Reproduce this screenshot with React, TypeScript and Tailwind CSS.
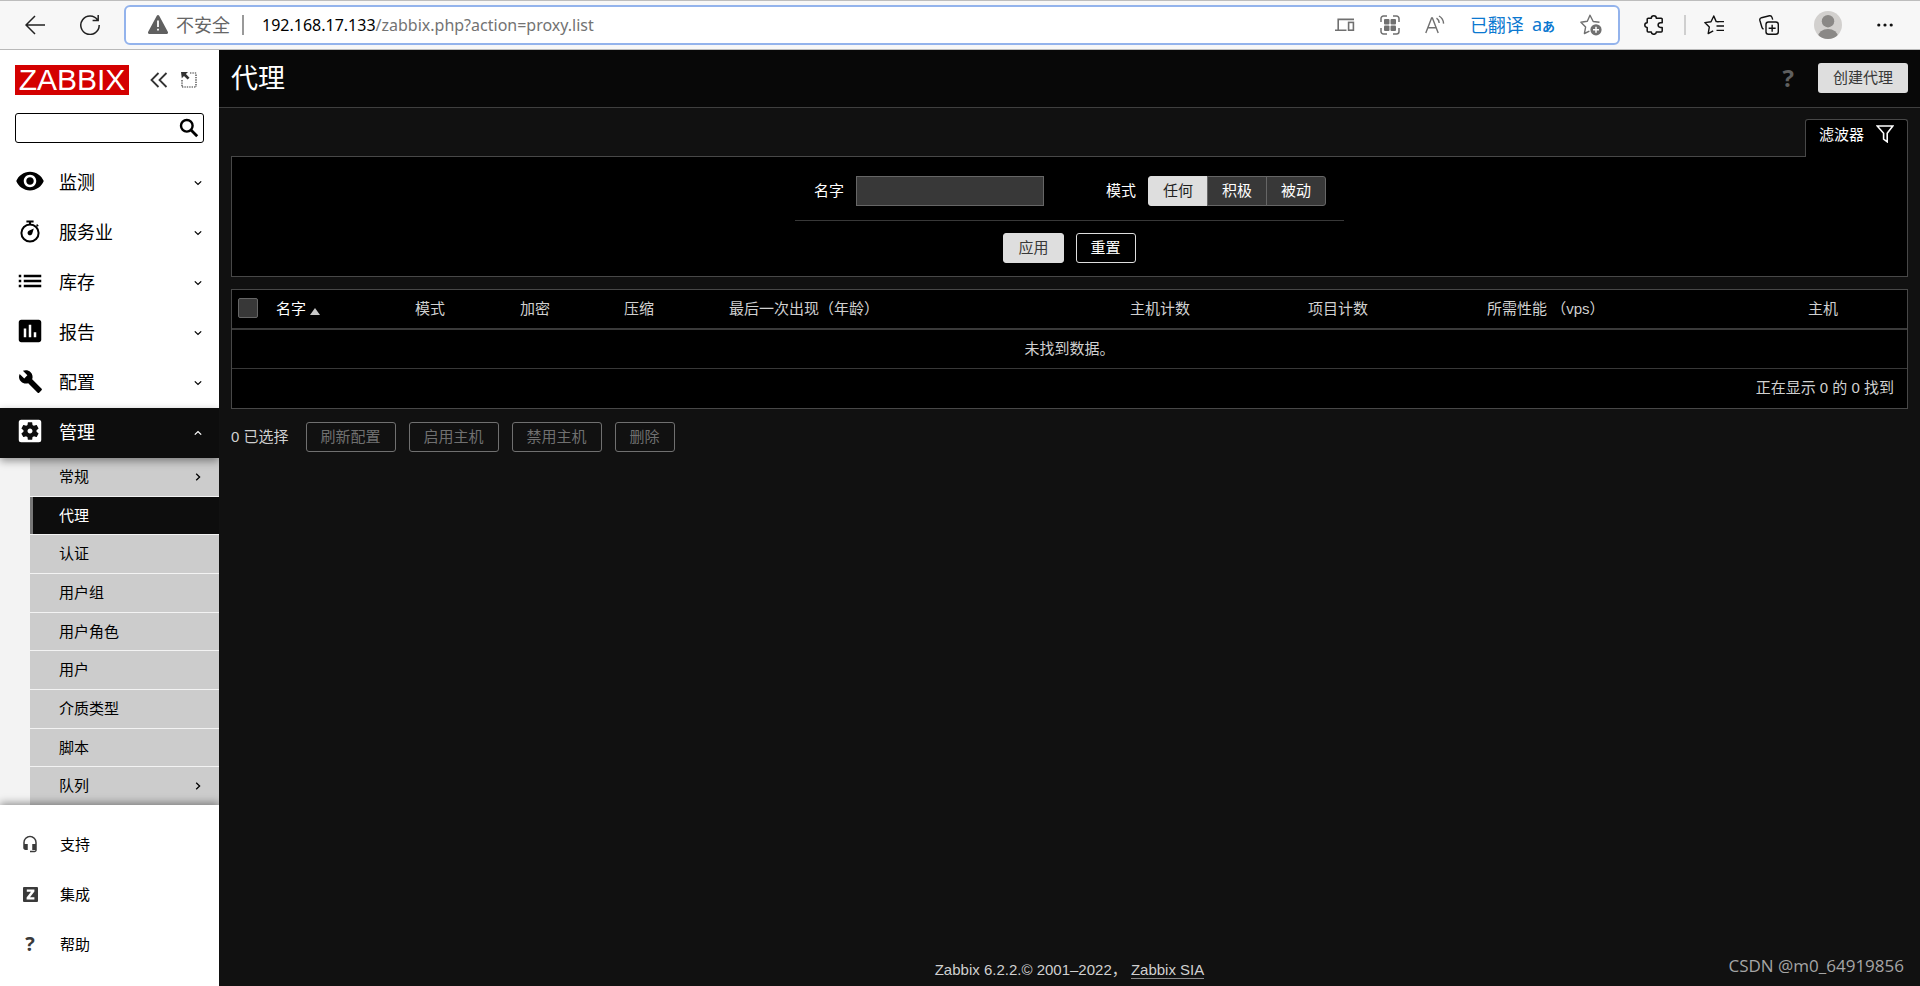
import React, { useState } from "react";
import {
  MdAssessment,
  MdBuild,
  MdHeadsetMic,
  MdList,
  MdSettingsApplications,
  MdVisibility,
} from "react-icons/md";

/* ---------- icons ---------- */

const SearchIcon = () => (
  <svg width="20" height="20" viewBox="0 0 20 20" fill="none" stroke="#000">
    <circle cx="7.800" cy="7.800" r="5.800" strokeWidth="2.400" />
    <path d="M12 12l6.200 6.200" strokeWidth="2.800" />
  </svg>
);

const StopwatchIcon = () => (
  <svg width="30" height="30" viewBox="0 0 30 30" fill="none">
    <circle cx="15" cy="17" r="8.6" stroke="#000" strokeWidth="2" />
    <path d="M11.4 5.6h7.200M15 5v3.500" stroke="#000" strokeWidth="2" />
    <path d="M21.600 8.600l1.600 1.600" stroke="#000" strokeWidth="1.500" />
    <path d="M18.800 12.400l-1.600 5.400a2.400 2.400 0 1 1-3.300-3z" fill="#000" />
  </svg>
);

const ChevronIcon = ({ dir }: { dir: "up" | "down" | "right" }) => (
  <svg
    width="8"
    height="8"
    viewBox="0 0 8 8"
    fill="none"
    stroke="currentColor"
    strokeWidth="1.3"
  >
    {dir === "down" && <path d="M0.8 2.4L4 5.4l3.200-3" />}
    {dir === "up" && <path d="M0.8 5.6L4 2.600l3.200 3" />}
    {dir === "right" && <path d="M2.200 0.800L5.600 4 2.200 7.200" />}
  </svg>
);

const CollapseIcon = () => (
  <svg width="18" height="16" viewBox="0 0 18 16" fill="none">
    <path d="M8.5 1L1.5 8l7 7M16.5 1l-7 7 7 7" stroke="#333" strokeWidth="1.8" />
  </svg>
);

const KioskIcon = () => (
  <svg width="16" height="16" viewBox="0 0 16 16" fill="none">
    <path
      d="M9 1h7M15 2.5V15M1 8v7M1 15h14"
      stroke="#333"
      strokeWidth="1.2"
      strokeDasharray="1.4 1"
    />
    <path d="M0 0h7L4.9 2.1l3.6 3.6-1.9 1.9-3.6-3.6L0.8 6.2z" fill="#333" />
  </svg>
);

const FunnelIcon = () => (
  <svg width="18" height="18" viewBox="0 0 18 18" fill="none">
    <path
      d="M1.2 1h15.6l-5.6 7.2v8.6l-3.6-2.6V8.2z"
      stroke="#fff"
      strokeWidth="1.6"
    />
  </svg>
);

const IntegrationIcon = () => (
  <svg width="15" height="15" viewBox="0 0 15 15">
    <rect width="15" height="15" rx="1" fill="#3a3a3a" />
    <path d="M3.8 2.600h7.600v2L7 10.300h4.400v2.200H3.600v-2L8 4.800H3.800z" fill="#fff" />
  </svg>
);

const BackIcon = () => (
  <svg width="20" height="20" viewBox="0 0 20 20" fill="none">
    <path d="M20 10H1.2M10 1L1 10l9 9" stroke="#222" strokeWidth="1.5" />
  </svg>
);

const ReloadIcon = () => (
  <svg width="20" height="20" viewBox="0 0 20 20" fill="none">
    <path d="M17.6 5A9.2 9.2 0 1 0 19.2 10M18.2 0v5.6h-5.6" stroke="#222" strokeWidth="1.5" />
  </svg>
);

const WarningIcon = () => (
  <svg width="20" height="19" viewBox="0 0 20 19">
    <path
      d="M8.8 0.8a1.4 1.4 0 0 1 2.4 0l8.6 16a1.4 1.4 0 0 1-1.2 2.2H1.4a1.4 1.4 0 0 1-1.2-2.2z"
      fill="#606060"
    />
    <path d="M10 5.5v6.5M10 13.8v1.8" stroke="#fff" strokeWidth="1.8" />
  </svg>
);

const DevicesIcon = () => (
  <svg width="20" height="20" viewBox="0 0 20 20" fill="none" stroke="#707070" strokeWidth="1.6">
    <path d="M3.2 14.500V4.400H19M0 15.200h11.500" />
    <rect x="13.600" y="7.400" width="4.800" height="7.800" />
  </svg>
);

const AppsIcon = () => (
  <svg width="20" height="20" viewBox="0 0 20 20" fill="none">
    <path
      d="M1 7V3.500A2.500 2.500 0 0 1 3.500 1H7M13 1h3.500A2.500 2.500 0 0 1 19 3.500V7M19 13v3.500A2.500 2.500 0 0 1 16.500 19H13M7 19H3.500A2.500 2.500 0 0 1 1 16.500V13"
      stroke="#707070"
      strokeWidth="1.5"
    />
    <g fill="#707070">
      <rect x="4" y="4" width="5.500" height="5.500" rx="1" />
      <rect x="10.500" y="4" width="5.500" height="5.500" rx="1" />
      <rect x="4" y="10.500" width="5.500" height="5.500" rx="1" />
      <rect x="10.500" y="10.500" width="5.500" height="5.500" rx="1" />
    </g>
  </svg>
);

const ReadAloudIcon = () => (
  <svg width="20" height="20" viewBox="0 0 20 20" fill="none" stroke="#707070" strokeWidth="1.4">
    <path d="M0.800 18L6.600 3h0.800l5.800 15M2.800 12.800h8.400" />
    <path d="M11.500 3.200c1.600 1 2.500 2.600 2.700 4.800M14 1c2.800 1.600 4.400 4.200 4.600 7.600" />
  </svg>
);

const StarAddIcon = () => (
  <svg width="22" height="22" viewBox="0 0 22 22" fill="none">
    <path
      d="M19.500 8.200l-6.300-0.700L10 1.200 7.300 7.300 0.900 8.200l4.700 4.900-1.200 6.400 5-2.400"
      stroke="#707070"
      strokeWidth="1.400"
      strokeLinejoin="round"
    />
    <circle cx="16" cy="15.800" r="5.600" fill="#707070" />
    <path d="M16 12.800v6M13 15.800h6" stroke="#fff" strokeWidth="1.500" />
  </svg>
);

const PuzzleIcon = () => (
  <svg width="20" height="20" viewBox="0 0 20 20" fill="none">
    <path
      d="M4.200 3.200h3.100C7.300 1.700 8.400 0.800 9.800 0.800s2.500 0.900 2.500 2.400h4.900a1 1 0 0 1 1 1v3.600h-1.600c-1.500 0-2.500 1-2.500 2.300s1 2.300 2.500 2.300h1.600v3.700a1 1 0 0 1-1 1h-4.900c0 1.300-1.100 2.200-2.500 2.200s-2.500-0.900-2.500-2.200H4.200a1 1 0 0 1-1-1v-3.700C1.700 12.400 0.800 11.400 0.800 10.100s0.900-2.300 2.400-2.300V4.200a1 1 0 0 1 1-1z"
      stroke="#111"
      strokeWidth="1.500"
      strokeLinejoin="round"
    />
  </svg>
);

const FavoritesIcon = () => (
  <svg width="20" height="20" viewBox="0 0 20 20" fill="none" stroke="#111" strokeWidth="1.400">
    <path
      d="M14.800 6.600h-2.600L9.800 1 7 6.700 0.800 7.600l4.500 4.500-1.100 6.500 5-2.700"
      strokeLinejoin="round"
    />
    <path d="M13 6.600h7M12.500 11h7.500M12.500 15.400h7.500" />
  </svg>
);

const CollectionsIcon = () => (
  <svg width="20" height="20" viewBox="0 0 20 20" fill="none" stroke="#111" strokeWidth="1.400">
    <rect x="7" y="7" width="12.300" height="12.300" rx="2.500" />
    <path d="M13.150 9.700v7M9.650 13.200h7" />
    <path d="M4.600 14.200A3 3 0 0 1 2.900 12.300L0.900 5.500A2.300 2.300 0 0 1 2.500 2.700L10.400 0.800A2.300 2.300 0 0 1 13 2.400l0.700 2.200" />
  </svg>
);

const AvatarIcon = () => (
  <svg width="28" height="28" viewBox="0 0 28 28">
    <clipPath id="avatar">
      <circle cx="14" cy="14" r="14" />
    </clipPath>
    <g clipPath="url(#avatar)">
      <rect width="28" height="28" fill="#d2d0ce" />
      <circle cx="14" cy="10.200" r="6.200" fill="#8a8886" />
      <ellipse cx="14" cy="26" rx="10" ry="8" fill="#8a8886" />
    </g>
  </svg>
);

const MoreIcon = () => (
  <svg width="16" height="4" viewBox="0 0 16 4" fill="#111">
    <circle cx="1.800" cy="2" r="1.600" />
    <circle cx="8" cy="2" r="1.600" />
    <circle cx="14.200" cy="2" r="1.600" />
  </svg>
);

/* ---------- browser toolbar ---------- */

const BrowserBar: React.FC = () => (
  <div className="flex h-[50px] items-center border-b border-[#b9b9b9] bg-[#f7f7f7] pr-[27px] pl-[25px] shadow-[inset_0_1px_0_#bdbdbd]">
    <button aria-label="返回" className="mr-[35px]">
      <BackIcon />
    </button>
    <button aria-label="刷新" className="mr-6">
      <ReloadIcon />
    </button>
    <div className="flex h-10 flex-1 items-center rounded-md border-2 border-[#93b3ec] bg-white pr-4 pl-[22px] font-['Noto_Sans','Noto_Sans_CJK_SC',sans-serif]">
      <WarningIcon />
      <span className="ml-2 text-lg leading-6 text-[#666]">不安全</span>
      <span className="mx-3 h-5 w-0.5 bg-[#999]" />
      <span className="ml-1.5 flex-1 text-base text-[#737373]">
        <span className="text-black">192.168.17.133</span>
        /zabbix.php?action=proxy.list
      </span>
      <div className="flex items-center gap-[25px]">
        <button aria-label="设备">
          <DevicesIcon />
        </button>
        <button aria-label="应用">
          <AppsIcon />
        </button>
        <button aria-label="大声朗读">
          <ReadAloudIcon />
        </button>
        <button className="flex items-center gap-2 text-lg leading-6 text-[#0b78d0]">
          <span>已翻译</span>
          <span className="text-lg leading-5">
            a<b className="text-[13px]">あ</b>
          </span>
        </button>
        <button aria-label="收藏此页">
          <StarAddIcon />
        </button>
      </div>
    </div>
    <button aria-label="扩展" className="ml-6">
      <PuzzleIcon />
    </button>
    <span className="mr-[18px] ml-5 h-5 w-0.5 bg-[#cfcfcf]" />
    <div className="flex items-center gap-[35px]">
      <button aria-label="收藏夹">
        <FavoritesIcon />
      </button>
      <button aria-label="集锦">
        <CollectionsIcon />
      </button>
      <button aria-label="个人资料">
        <AvatarIcon />
      </button>
      <button aria-label="更多">
        <MoreIcon />
      </button>
    </div>
  </div>
);

/* ---------- sidebar ---------- */

const menu = [
  { label: "监测", icon: <MdVisibility size={30} /> },
  { label: "服务业", icon: <StopwatchIcon /> },
  { label: "库存", icon: <MdList size={30} /> },
  { label: "报告", icon: <MdAssessment size={30} /> },
  { label: "配置", icon: <MdBuild size={25} /> },
  { label: "管理", icon: <MdSettingsApplications size={30} />, open: true },
];

const submenu = [
  { label: "常规", more: true },
  { label: "代理", active: true },
  { label: "认证" },
  { label: "用户组" },
  { label: "用户角色" },
  { label: "用户" },
  { label: "介质类型" },
  { label: "脚本" },
  { label: "队列", more: true },
];

const support = [
  { label: "支持", icon: <MdHeadsetMic size={18} /> },
  { label: "集成", icon: <IntegrationIcon /> },
  {
    label: "帮助",
    icon: <b className="font-['Open_Sans',sans-serif] text-xl leading-5">?</b>,
  },
];

const Sidebar: React.FC = () => (
  <aside className="flex w-[219px] shrink-0 flex-col bg-white text-black">
    <div className="flex items-center px-[15px] pt-[15px]">
      <a
        href="#"
        className="flex h-[30px] w-[114px] items-center justify-center bg-[#d40000] text-3xl leading-none text-white"
      >
        ZABBIX
      </a>
      <button aria-label="收起" className="ml-[21px]">
        <CollapseIcon />
      </button>
      <button aria-label="隐藏" className="ml-[13px]">
        <KioskIcon />
      </button>
    </div>
    <form className="mx-[15px] mt-[18px] mb-[15px] flex h-[30px] items-center rounded-[3px] border border-black">
      <input aria-label="搜索" className="min-w-0 flex-1 px-2 outline-none" />
      <button type="button" aria-label="搜索" className="mr-1">
        <SearchIcon />
      </button>
    </form>

    <nav className="flex flex-1 flex-col">
      {menu.map((item) => (
        <a
          key={item.label}
          href="#"
          className={
            item.open
              ? "relative flex h-[50px] items-center bg-[#0d0d0d] pr-[17px] pl-[15px] text-white shadow-[0_3px_8px_rgba(0,0,0,0.4)]"
              : "flex h-[50px] items-center pr-[17px] pl-[15px]"
          }
        >
          <span className="mr-3.5 flex w-[30px] justify-center pb-1">{item.icon}</span>
          <span className="flex-1 text-lg leading-6">{item.label}</span>
          <ChevronIcon dir={item.open ? "up" : "down"} />
        </a>
      ))}
      <div className="flex flex-1 flex-col gap-px bg-[#f3f3f3] pl-[30px]">
        {submenu.map((item) => (
          <a
            key={item.label}
            href="#"
            className={
              item.active
                ? "flex min-h-8 flex-1 items-center border-l-3 border-[#777] bg-[#0d0d0d] pr-[17px] pl-[26px] text-white"
                : "flex min-h-8 flex-1 items-center bg-[#cccccc] pr-[17px] pl-[29px]"
            }
          >
            <span className="flex-1">{item.label}</span>
            {item.more && <ChevronIcon dir="right" />}
          </a>
        ))}
      </div>
    </nav>

    <div className="relative bg-white pt-[15px] pb-4 shadow-[0_-2px_8px_rgba(0,0,0,0.4)]">
      {support.map((item) => (
        <a key={item.label} href="#" className="flex h-[50px] items-center pl-[15px]">
          <span className="mr-[15px] flex w-[30px] justify-center pb-0.5 text-[#3a3a3a]">
            {item.icon}
          </span>
          {item.label}
        </a>
      ))}
    </div>
  </aside>
);

/* ---------- page ---------- */

const modes = ["任何", "积极", "被动"];

const Filter: React.FC = () => {
  const [mode, setMode] = useState("任何");

  return (
    <section>
      <div className="flex justify-end">
        <button className="relative -mb-px flex h-[38px] items-start rounded-t-[3px] border border-b-0 border-[#484848] bg-black px-[13px] pt-[5px] text-white">
          <span className="mr-3">滤波器</span>
          <FunnelIcon />
        </button>
      </div>
      <form className="flex flex-col items-center border border-[#484848] bg-black pt-[19px] pb-[13px] text-white">
        <div className="flex h-[45px] items-start justify-between border-b border-[#383838] px-[19px]">
          <div className="flex items-center">
            <label htmlFor="name" className="mr-3">
              名字
            </label>
            <input
              id="name"
              className="h-[30px] w-[188px] border border-[#666] bg-[#383838] px-1.5 outline-none"
            />
          </div>
          <div className="ml-[62px] flex items-center">
            <span id="mode" className="mr-3">
              模式
            </span>
            <div role="radiogroup" aria-labelledby="mode" className="flex">
              {modes.map((m) => (
                <label key={m} className="group -mr-px">
                  <input
                    type="radio"
                    name="mode"
                    checked={mode === m}
                    onChange={() => setMode(m)}
                    className="peer sr-only"
                  />
                  <span className="flex h-[30px] items-center border border-[#666] bg-[#383838] px-3.5 group-first:rounded-l-[3px] group-last:rounded-r-[3px] peer-checked:border-[#dedede] peer-checked:bg-[#dedede] peer-checked:text-[#1f1f1f]">
                    {m}
                  </span>
                </label>
              ))}
            </div>
          </div>
        </div>
        <div className="mt-3 flex gap-3">
          <button
            type="button"
            className="h-[30px] rounded-[3px] border border-[#dedede] bg-[#dedede] px-3.5 text-[#383838]"
          >
            应用
          </button>
          <button
            type="button"
            className="h-[30px] rounded-[3px] border border-[#dedede] px-3.5"
          >
            重置
          </button>
        </div>
      </form>
    </section>
  );
};

const ProxyTable: React.FC = () => (
  <div className="mt-3 border border-[#484848] bg-black">
    <table className="w-full border-collapse text-left">
      <thead>
        <tr className="h-[39px] border-b-2 border-[#3a3a3a] *:px-1.5 *:font-normal">
          <th className="w-[38px] pt-2 align-top">
            <input
              type="checkbox"
              aria-label="全选"
              className="block size-5 appearance-none rounded-[2px] border border-[#666] bg-[#383838]"
            />
          </th>
          <th className="w-[139px]">
            <a href="#" className="flex items-center text-white">
              名字
              <span className="mt-1 ml-1 border-x-5 border-b-7 border-x-transparent border-b-[#c8c8c8]" />
            </a>
          </th>
          <th className="w-[105px]">模式</th>
          <th className="w-[104px]">加密</th>
          <th className="w-[105px]">压缩</th>
          <th className="w-[401px]">最后一次出现（年龄）</th>
          <th className="w-[178px]">主机计数</th>
          <th className="w-[179px]">项目计数</th>
          <th className="w-[321px]">所需性能 （vps）</th>
          <th className="w-[105px]">主机</th>
        </tr>
      </thead>
      <tbody>
        <tr className="h-[39px] border-b border-[#383838]">
          <td colSpan={10} className="text-center">
            未找到数据。
          </td>
        </tr>
        <tr className="h-10">
          <td colSpan={10} className="pr-[13px] text-right">
            正在显示 0 的 0 找到
          </td>
        </tr>
      </tbody>
    </table>
  </div>
);

const actions = ["刷新配置", "启用主机", "禁用主机", "删除"];

const App: React.FC = () => (
  <div className="flex min-h-screen flex-col font-['Liberation_Sans','Noto_Sans_CJK_SC',sans-serif] text-[15px] leading-5">
    <BrowserBar />
    <div className="flex flex-1">
      <Sidebar />
      <main className="relative flex min-w-0 flex-1 flex-col bg-[#111] text-[#d0d0d0]">
        <header className="flex h-[58px] items-center border-b border-[#3f3f3f] bg-[#080808] px-3">
          <h1 className="flex-1 text-[27px] leading-9 text-white">代理</h1>
          <div className="flex items-center gap-6 pb-0.5">
            <a
              href="#"
              className="font-['Open_Sans',sans-serif] text-2xl leading-6 font-bold text-[#5f5f5f]"
            >
              ?
            </a>
            <button className="h-[30px] rounded-[3px] bg-[#dedede] px-[15px] text-[#383838]">
              创建代理
            </button>
          </div>
        </header>
        <div className="px-3 pt-[11px]">
          <Filter />
          <ProxyTable />
          <div className="mt-[13px] flex items-center gap-[13px]">
            <span className="mr-1">0 已选择</span>
            {actions.map((action) => (
              <button
                key={action}
                disabled
                className="h-[30px] rounded-[3px] border border-[#707070] px-3.5 text-[#707070]"
              >
                {action}
              </button>
            ))}
          </div>
        </div>
        <footer className="mt-auto pb-1.5 text-center">
          Zabbix 6.2.2.© 2001–2022，{" "}
          <a href="#" className="border-b border-[#888]">
            Zabbix SIA
          </a>
        </footer>
        <span className="absolute right-4 bottom-2 font-['Open_Sans',sans-serif] text-[17px] leading-6 text-[#a5a5a5]">
          CSDN @m0_64919856
        </span>
      </main>
    </div>
  </div>
);

export default App;
